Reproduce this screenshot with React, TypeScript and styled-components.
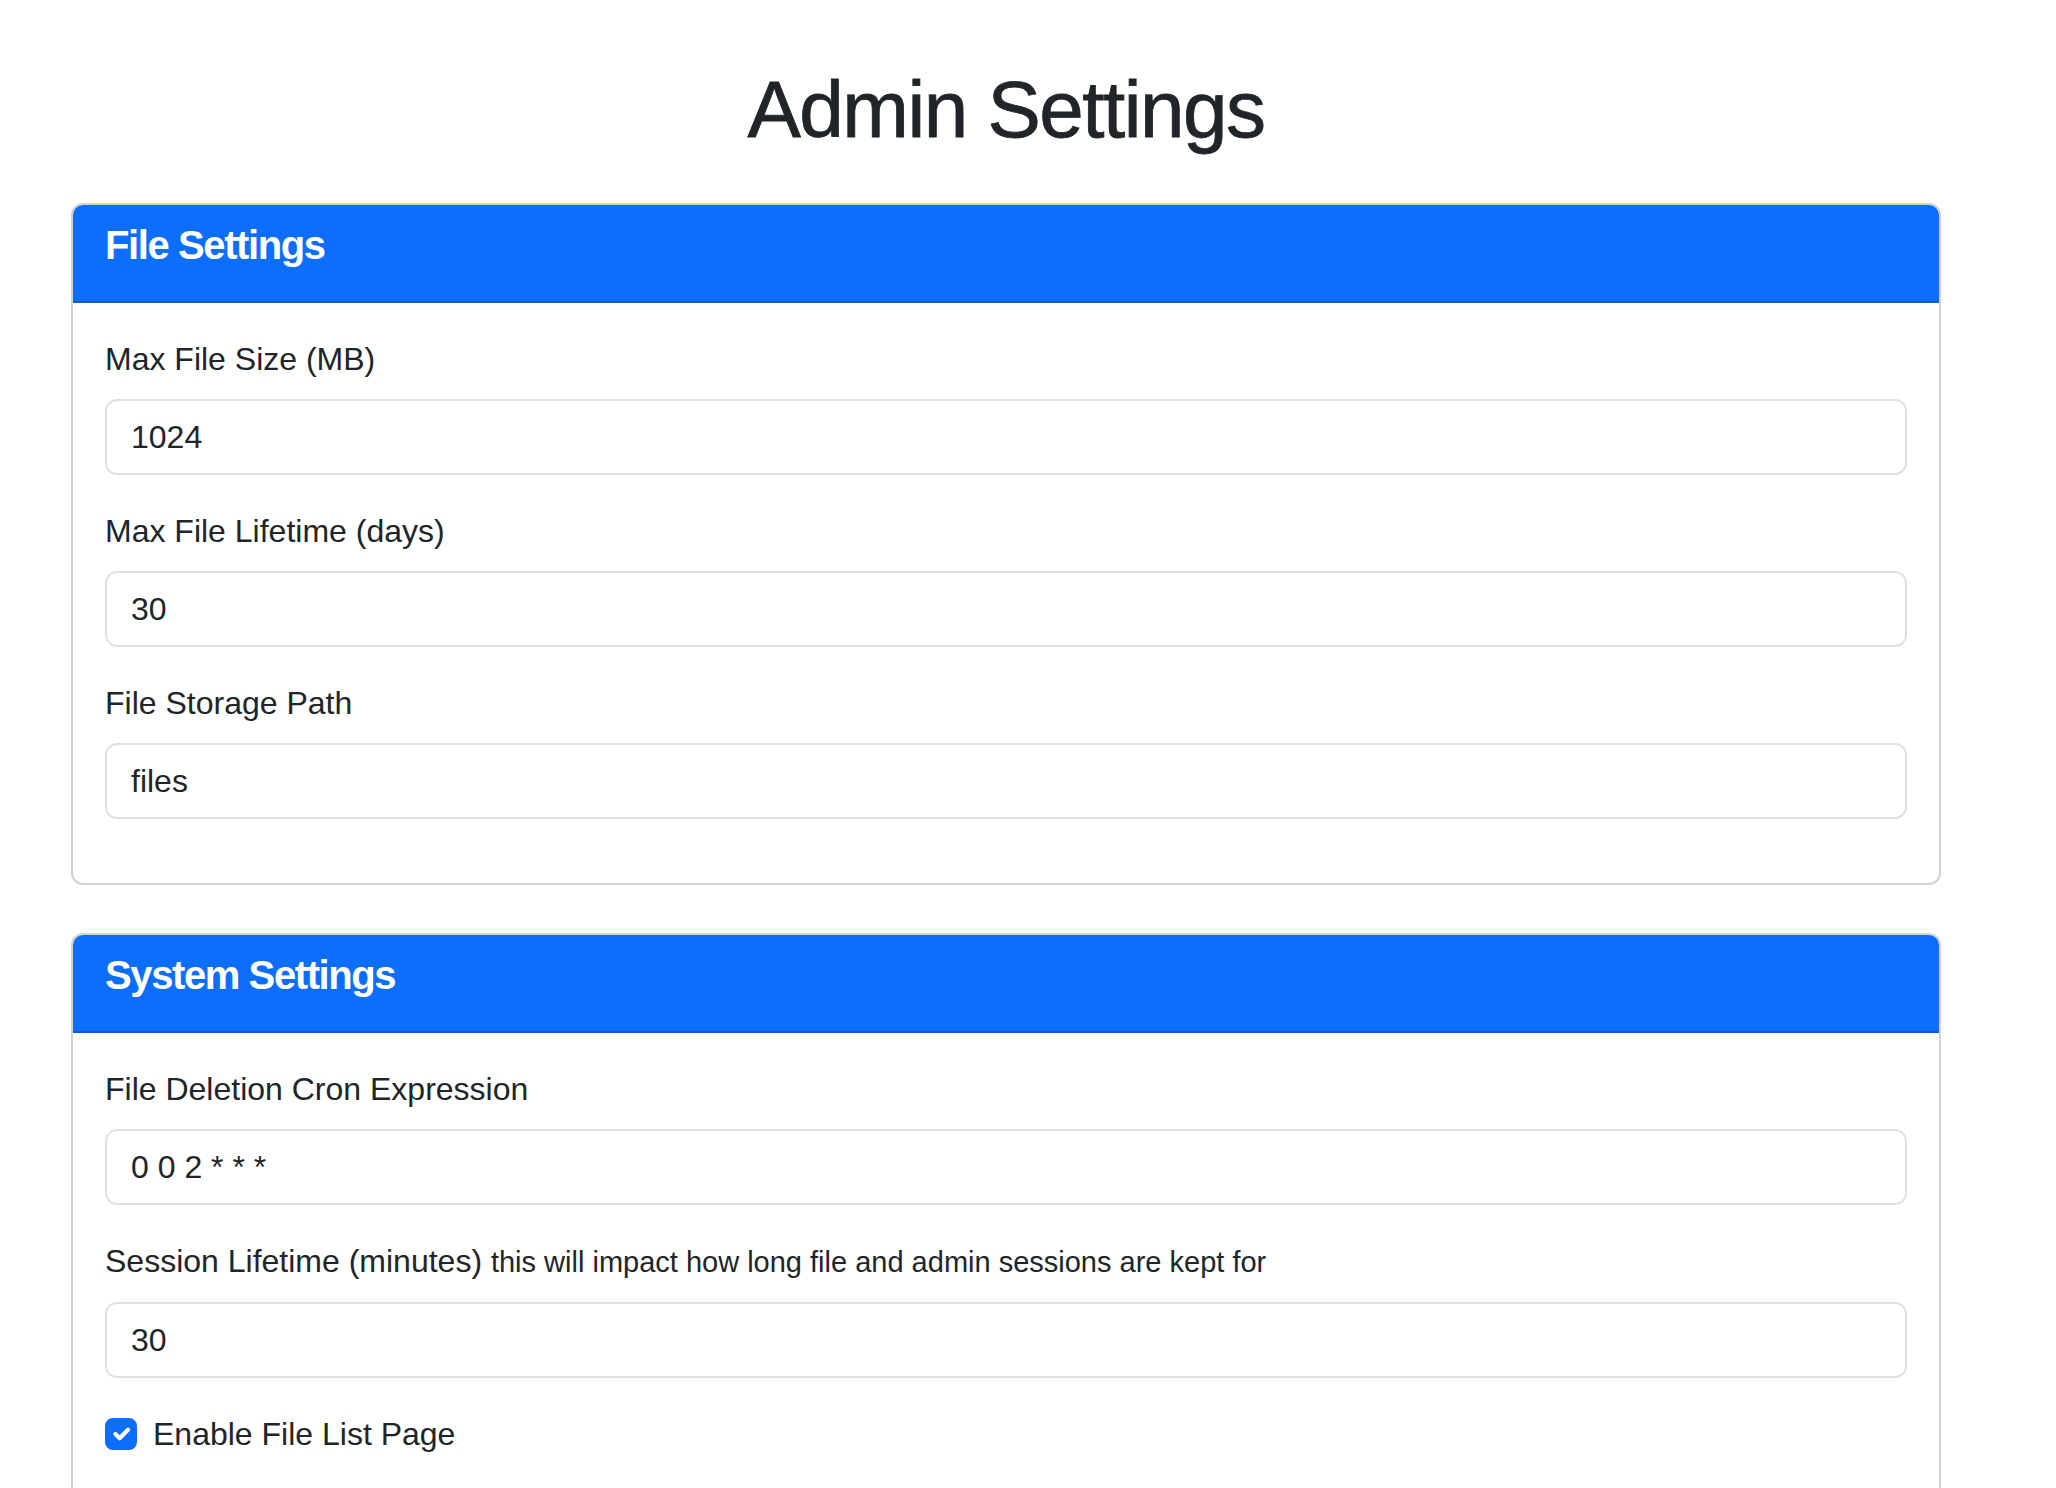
import React from 'react'
import styled, { createGlobalStyle } from 'styled-components'

const GlobalStyle = createGlobalStyle`
  html, body {
    margin: 0;
    padding: 0;
    background: #fff;
  }
  body {
    font-family: "Liberation Sans", Arial, Helvetica, sans-serif;
    font-size: 32px;
    line-height: 1.5;
    color: #212529;
  }
  *, *::before, *::after {
    box-sizing: border-box;
  }
`

const Container = styled.div`
  width: 1870px;
  margin-left: 71px;
  padding-top: 62px;
`

const PageTitle = styled.h1`
  margin: 0 0 45px;
  font-size: 80px;
  font-weight: 400;
  line-height: 1.2;
  letter-spacing: -1.5px;
  text-align: center;
  -webkit-text-stroke: 0.8px #212529;
`

const Card = styled.section`
  border: 2px solid rgba(0, 0, 0, 0.175);
  border-radius: 12px;
  margin-bottom: 48px;
  overflow: hidden;
  background: #fff;
`

const CardHeader = styled.header`
  background: #0d6efd;
  color: #fff;
  padding: 16px 32px;
  border-bottom: 2px solid rgba(0, 0, 0, 0.175);
`

const CardTitle = styled.h5`
  margin: 0 0 16px;
  font-size: 40px;
  line-height: 1.2;
  font-weight: 700;
  letter-spacing: -1.4px;
`

const CardBody = styled.div`
  padding: 32px;
`

const Field = styled.div`
  margin-bottom: 32px;
`

const Label = styled.label`
  display: block;
  margin-bottom: 16px;
  font-size: 32px;
  line-height: 48px;
`

const Hint = styled.small`
  font-size: 29px;
`

const TextInput = styled.input`
  display: block;
  width: 100%;
  margin: 0;
  padding: 12px 24px;
  font-family: inherit;
  font-size: 32px;
  line-height: 48px;
  color: #212529;
  background: #fff;
  border: 2px solid #dee2e6;
  border-radius: 12px;
  outline: none;
`

const CheckRow = styled.div`
  display: flex;
  align-items: flex-start;
  gap: 16px;
  margin-bottom: 32px;
  line-height: 48px;
`

const CheckBox = styled.span<{ checked: boolean }>`
  flex: none;
  width: 32px;
  height: 32px;
  margin-top: 8px;
  border-radius: 8px;
  display: flex;
  align-items: center;
  justify-content: center;
  background: ${p => (p.checked ? '#0d6efd' : '#fff')};
  border: 2px solid ${p => (p.checked ? '#0d6efd' : '#dee2e6')};
`

const CheckLabel = styled.label`
  font-size: 32px;
`

type FieldDef = { id: string; label: string; hint?: string; value: string }

const fileFields: FieldDef[] = [
  { id: 'maxFileSize', label: 'Max File Size (MB)', value: '1024' },
  { id: 'maxFileLifetime', label: 'Max File Lifetime (days)', value: '30' },
  { id: 'fileStoragePath', label: 'File Storage Path', value: 'files' },
]

const systemFields: FieldDef[] = [
  { id: 'cron', label: 'File Deletion Cron Expression', value: '0 0 2 * * *' },
  {
    id: 'sessionLifetime',
    label: 'Session Lifetime (minutes)',
    hint: 'this will impact how long file and admin sessions are kept for',
    value: '30',
  },
]

const SettingField = ({ f }: { f: FieldDef }) => (
  <Field>
    <Label htmlFor={f.id}>
      {f.label}
      {f.hint && <> <Hint>{f.hint}</Hint></>}
    </Label>
    <TextInput id={f.id} type="text" defaultValue={f.value} />
  </Field>
)

const CheckIcon = () => (
  <svg width="28" height="28" viewBox="0 0 20 20" fill="none">
    <path d="m6 10 3 3 6-6" stroke="#fff" strokeWidth="3" strokeLinecap="round" strokeLinejoin="round" />
  </svg>
)

const App: React.FC = () => {
  return (
    <>
      <GlobalStyle />
      <Container>
        <PageTitle>Admin Settings</PageTitle>

        <Card>
          <CardHeader>
            <CardTitle>File Settings</CardTitle>
          </CardHeader>
          <CardBody>
            {fileFields.map(f => <SettingField key={f.id} f={f} />)}
          </CardBody>
        </Card>

        <Card>
          <CardHeader>
            <CardTitle>System Settings</CardTitle>
          </CardHeader>
          <CardBody>
            {systemFields.map(f => <SettingField key={f.id} f={f} />)}
            <CheckRow>
              <CheckBox checked>
                <CheckIcon />
              </CheckBox>
              <CheckLabel>Enable File List Page</CheckLabel>
            </CheckRow>
          </CardBody>
        </Card>
      </Container>
    </>
  )
}

export default App
